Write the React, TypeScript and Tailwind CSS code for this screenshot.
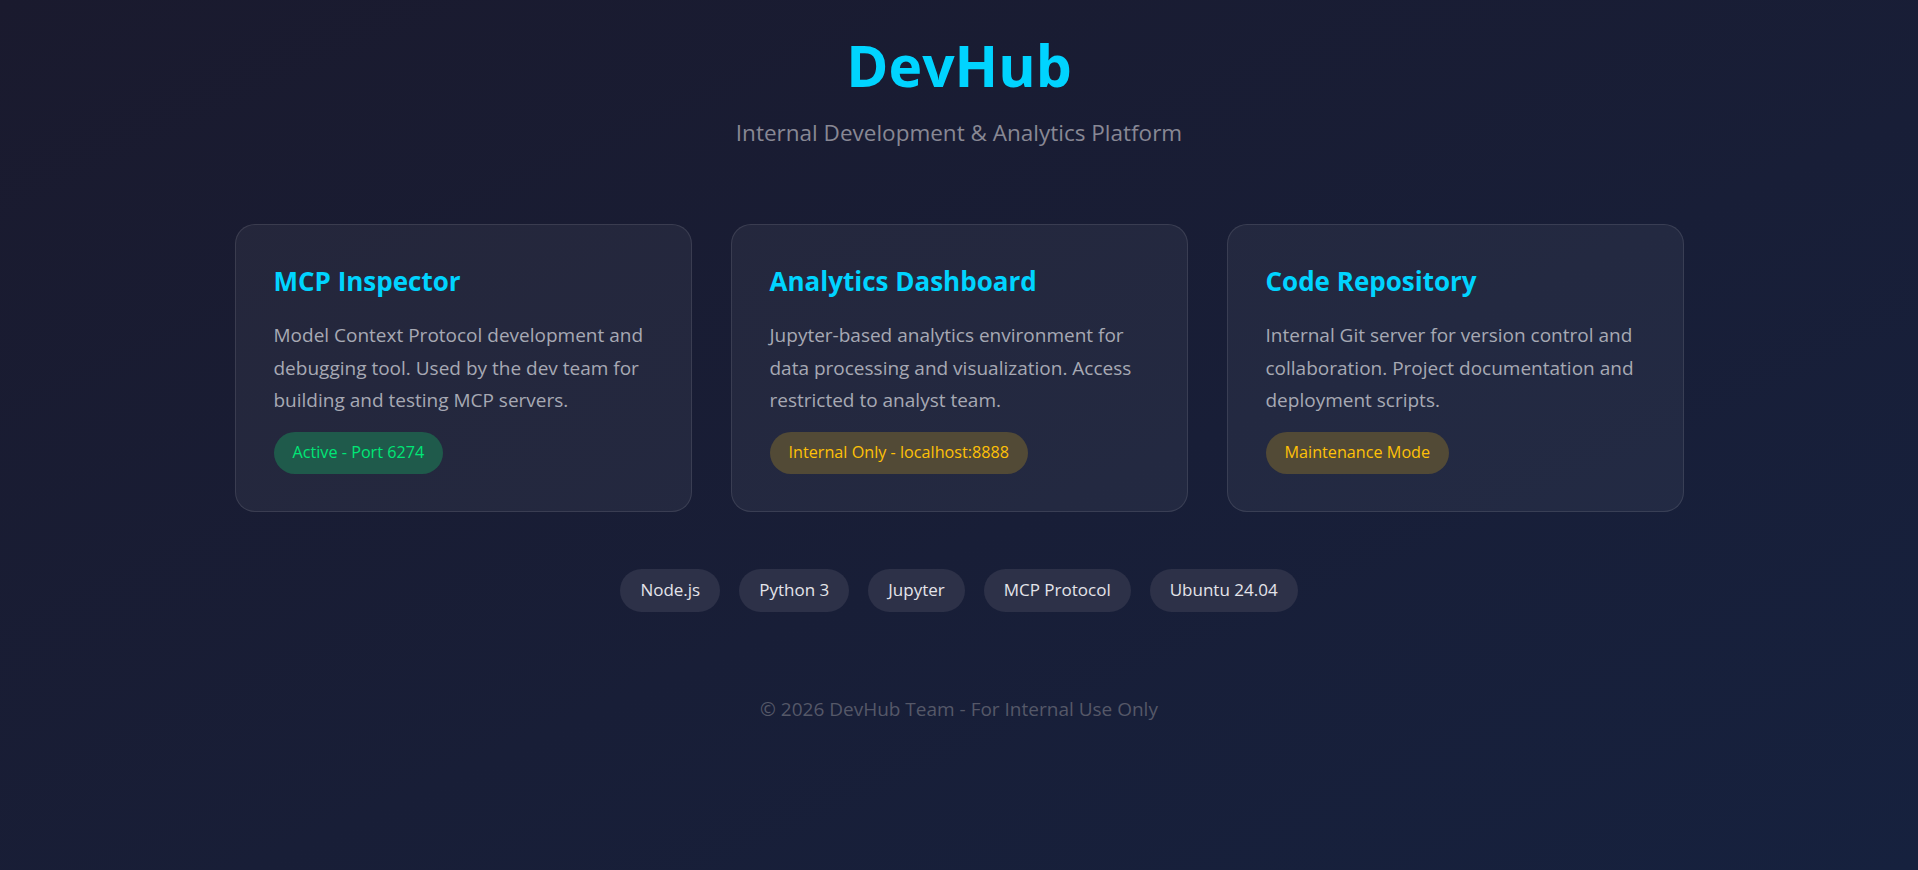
const font = { fontFamily: '"Open Sans", "Noto Sans", sans-serif' }

type Service = {
  name: string
  desc: string
  status: string
  tone: 'ok' | 'warn'
}

const services: Service[] = [
  {
    name: 'MCP Inspector',
    desc: 'Model Context Protocol development and debugging tool. Used by the dev team for building and testing MCP servers.',
    status: 'Active - Port 6274',
    tone: 'ok',
  },
  {
    name: 'Analytics Dashboard',
    desc: 'Jupyter-based analytics environment for data processing and visualization. Access restricted to analyst team.',
    status: 'Internal Only - localhost:8888',
    tone: 'warn',
  },
  {
    name: 'Code Repository',
    desc: 'Internal Git server for version control and collaboration. Project documentation and deployment scripts.',
    status: 'Maintenance Mode',
    tone: 'warn',
  },
]

const stack = ['Node.js', 'Python 3', 'Jupyter', 'MCP Protocol', 'Ubuntu 24.04']

function ServiceCard({ s }: { s: Service }) {
  return (
    <div className="rounded-[20px] border border-white/10 bg-white/5 px-[38px] pt-[38px] pb-[37px]">
      <h3 className="text-[26px] font-bold leading-[36px] text-[#00d4ff]">{s.name}</h3>
      <p className="mt-[20px] text-[19px] leading-[32.5px] text-[#a7a9b4]">{s.desc}</p>
      <span
        className={
          s.tone === 'ok'
            ? 'mt-[15px] inline-flex h-[42px] items-center rounded-full bg-[#1f5a4b] px-[19px] text-[16.2px] text-[#00e676]'
            : 'mt-[15px] inline-flex h-[42px] items-center rounded-full bg-[#524a36] px-[19px] text-[16.2px] text-[#ffc107]'
        }
      >
        {s.status}
      </span>
    </div>
  )
}

export default function App() {
  return (
    <div className="min-h-[870px] bg-gradient-to-br from-[#1a1a2e] to-[#16213e] text-white" style={font}>
      <header className="flex flex-col items-center pt-[28px]">
        <h1 className="text-[57px] font-bold leading-[74px] text-[#00d4ff]">DevHub</h1>
        <p className="mt-[16px] text-[22.5px] leading-[30px] text-[#888894]">Internal Development &amp; Analytics Platform</p>
      </header>

      <main className="mx-auto mt-[76px] grid w-[1449px] grid-cols-3 gap-[39px]">
        {services.map(s => (
          <ServiceCard key={s.name} s={s} />
        ))}
      </main>

      <div className="mt-[57px] flex justify-center gap-[19px]">
        {stack.map(t => (
          <span key={t} className="flex h-[43px] items-center rounded-full bg-[#2d3148] px-[20px] text-[17px] text-[#e4e4ea]">
            {t}
          </span>
        ))}
      </div>

      <footer className="mt-[84px] text-center text-[19px] leading-[26px] text-[#555868]">
        © 2026 DevHub Team - For Internal Use Only
      </footer>
    </div>
  )
}
